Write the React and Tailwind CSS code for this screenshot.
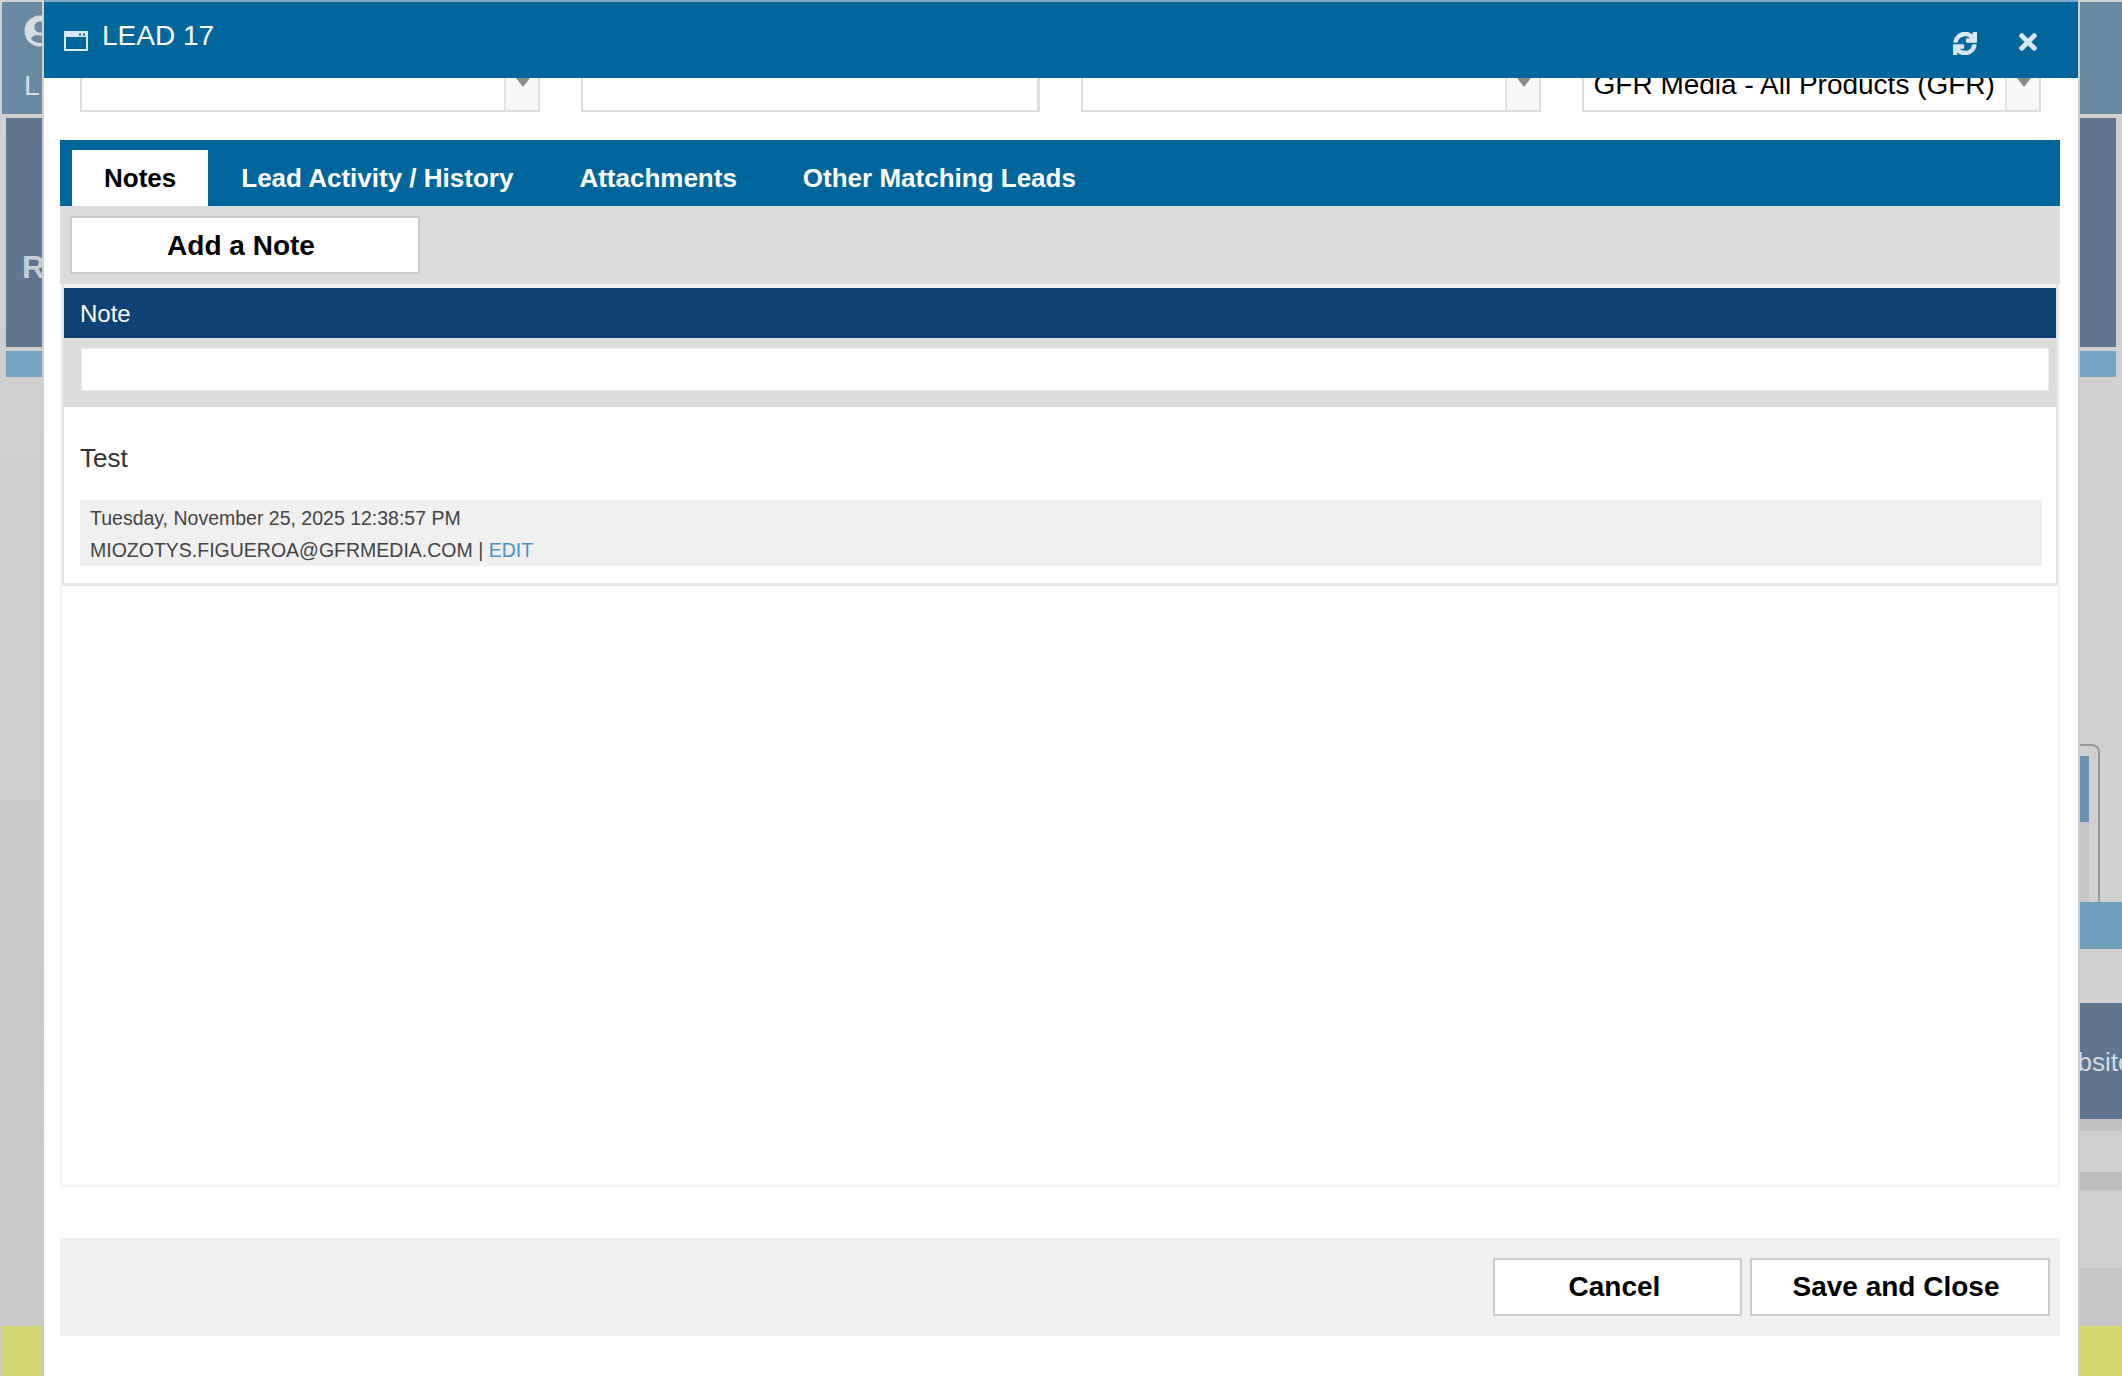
import { FaSync, FaTimes, FaUserCircle } from 'react-icons/fa';

const tabs = ['Lead Activity / History', 'Attachments', 'Other Matching Leads'];

const Arrow = () => (
  <svg width="14" height="9" viewBox="0 0 14 9" className="block">
    <polygon points="0,0 14,0 7,9" fill="#8a8a8a" />
  </svg>
);

const SelectBox = ({ children, arrow = true }) => (
  <div className={`flex h-[34px] overflow-hidden border-x-2 border-b-2 border-[#dddddd] bg-white ${arrow ? '' : 'border-r-[3px]'}`}>
    <div className="flex-1 overflow-hidden whitespace-nowrap pl-[10px]">{children}</div>
    {arrow && (
      <div className="flex w-[34px] justify-center border-l-2 border-[#e2e2e2] bg-[#f8f8f8] pl-[2px]">
        <Arrow />
      </div>
    )}
  </div>
);

const LeftBackdrop = () => (
  <div className="flex w-[44px] flex-col overflow-hidden bg-linear-to-b from-[#d2d2d2] to-[#c8c8c8]">
    <div className="ml-[2px] mt-[2px] h-[112px] w-[40px] overflow-hidden bg-[#6a8aa3] pl-[22px] pt-[13px] text-[#d9dde0]">
      <FaUserCircle size={32} className="block" />
      <div className="mt-[25px] text-[28px] leading-[28px]">L</div>
    </div>
    <div className="ml-[6px] mt-[4px] h-[229px] w-[36px] overflow-hidden bg-[#5f7590] pl-[16px] pt-[133px] text-[32px] font-bold leading-[32px] text-[#c8ced6]">R</div>
    <div className="ml-[6px] mt-[4px] h-[26px] w-[36px] bg-[#74a5c3]" />
    <div className="mt-auto ml-[2px] h-[50px] w-[40px] bg-[#d3d672]" />
  </div>
);

const RightBackdrop = () => (
  <div className="flex w-[44px] flex-col overflow-hidden bg-[#d0d0d0] pl-[2px]">
    <div className="mt-[2px] h-[112px] bg-[#6a8aa3]" />
    <div className="mt-[4px] h-[229px] w-[36px] bg-[#5f7590]" />
    <div className="mt-[4px] h-[26px] w-[36px] bg-[#74a5c3]" />
    <div className="mt-[367px] h-[158px] w-[20px] rounded-tr-lg border-r-2 border-t-2 border-[#9a9a9a] pt-[10px]">
      <div className="h-[146px] w-[9px] bg-[#c6c6c6]">
        <div className="h-[66px] bg-[#6a93b0]" />
      </div>
    </div>
    <div className="h-[47px] bg-[#6fa0bd]" />
    <div className="mt-[54px] flex h-[116px] items-center overflow-hidden bg-[#5f7590] pt-[2px]">
      <span className="-ml-[41px] whitespace-nowrap text-[26px] text-[#d5dbe2]">Website</span>
    </div>
    <div className="h-[12px] bg-[#c2c2c2]" />
    <div className="mt-[41px] h-[18px] bg-[#bdbdbd]" />
    <div className="mt-[78px] h-[58px] bg-[#c6c6c6]" />
    <div className="h-[50px] bg-[#d5d76f]" />
  </div>
);

export default function App() {
  return (
    <div className="flex h-[1376px] w-[2122px] overflow-hidden font-['Liberation_Sans',Arial,sans-serif]">
      <LeftBackdrop />

      <div className="flex w-[2034px] flex-col bg-white">
        {/* modal title bar */}
        <div className="h-[2px] bg-[#7fa9c2]" />
        <div className="flex h-[76px] items-start bg-[#00669c] pl-[20px] pr-[41px] text-[#d8e8f2]">
          <svg width="24" height="20" viewBox="0 0 24 20" className="mt-[29px]">
            <rect x="1" y="1" width="22" height="18" fill="none" stroke="#d8eaf5" strokeWidth="2" />
            <rect x="1" y="1" width="22" height="5" fill="#d8eaf5" />
            <rect x="15" y="2.5" width="2" height="2" fill="#00669c" />
            <rect x="19" y="2.5" width="2" height="2" fill="#00669c" />
          </svg>
          <span className="ml-[14px] mt-[20px] text-[28px] leading-[28px] text-white">LEAD 17</span>
          <div className="ml-auto flex items-start gap-[42px]">
            <FaSync className="mt-[30px] h-[23px] w-[24px] stroke-[30px]" />
            <FaTimes className="mt-[27px] h-[26px] w-[18px]" />
          </div>
        </div>

        {/* select row, scrolled under the title bar */}
        <div className="grid h-[34px] grid-cols-4 gap-[41px] pl-[36px] pr-[37px]">
          <SelectBox />
          <SelectBox arrow={false} />
          <SelectBox />
          <SelectBox>
            <div className="-mt-[7px] text-[28px] leading-[28px] text-black">GFR Media - All Products (GFR)</div>
          </SelectBox>
        </div>

        <div className="flex flex-1 flex-col pl-[16px] pr-[18px]">
          {/* tabs */}
          <div className="mt-[28px] flex h-[66px] items-end bg-[#00669c] pl-[12px] text-[26px] font-bold">
            <div className="flex h-[56px] items-center bg-white px-[32px] text-black">Notes</div>
            {tabs.map((tab) => (
              <div key={tab} className="flex h-[56px] items-center px-[33px] text-white">{tab}</div>
            ))}
          </div>

          <div className="h-[78px] bg-[#dcdcdc] pl-[10px] pt-[10px]">
            <button className="h-[58px] w-[350px] border-2 border-[#cccccc] bg-white pr-[8px] pt-[1px] text-[28px] font-bold text-black">Add a Note</button>
          </div>

          {/* notes grid */}
          <div className="h-[903px] border-x-2 border-b-2 border-[#f2f2f2] bg-white">
            <div className="border-x-2 border-b-[3px] border-[#e6e6e6] bg-[#eef0f1] pt-[4px]">
              <div className="flex h-[50px] items-center bg-[#0e4174] pl-[16px] pt-[1px] text-[24px] text-white">Note</div>
              <div className="h-[69px] border-t-[3px] border-[#dde3df] bg-[#dcdcdc] pl-[17px] pr-[7px] pt-[7px]">
                <div className="h-[43px] border border-[#ececec] bg-white" />
              </div>
              <div className="h-[176px] bg-white pl-[16px] pr-[14px]">
                <div className="flex h-[93px] items-center pt-[9px] text-[26px] text-[#333333]">Test</div>
                <div className="h-[66px] bg-[#f0f0f0] pl-[10px] pt-[2px] text-[19.5px] leading-[32px] text-[#444444]">
                  <div>Tuesday, November 25, 2025 12:38:57 PM</div>
                  <div>
                    MIOZOTYS.FIGUEROA@GFRMEDIA.COM | <span className="text-[#4a94c4]">EDIT</span>
                  </div>
                </div>
              </div>
            </div>
          </div>

          {/* footer */}
          <div className="mt-[51px] flex h-[98px] items-center justify-end gap-[8px] bg-[#f0f0f0] pr-[10px]">
            <button className="h-[58px] w-[249px] border-2 border-[#cccccc] bg-white pr-[6px] text-[28px] font-bold text-black">Cancel</button>
            <button className="h-[58px] w-[300px] border-2 border-[#cccccc] bg-white pr-[8px] text-[28px] font-bold text-black">Save and Close</button>
          </div>
        </div>
      </div>

      <RightBackdrop />
    </div>
  );
}
